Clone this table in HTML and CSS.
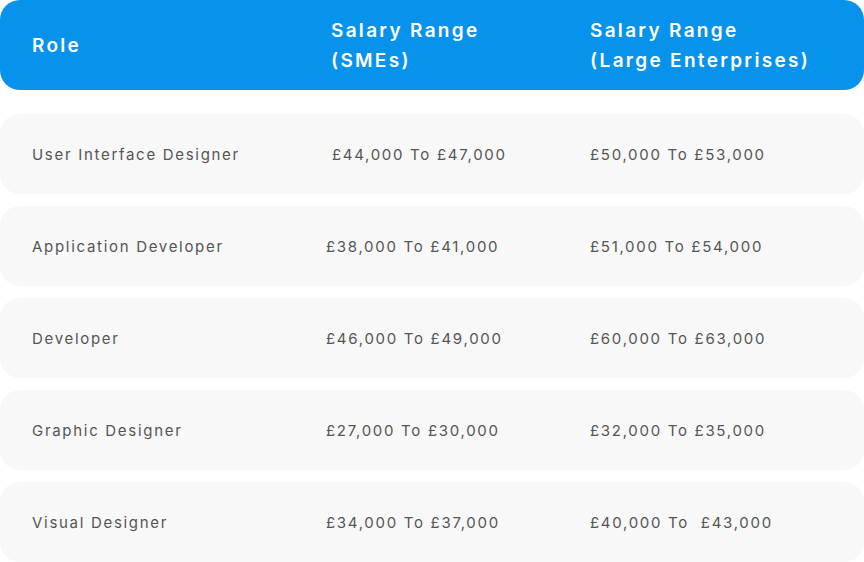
FILE: index.html
```html
<!DOCTYPE html>
<html>
<head>
<meta charset="utf-8">
<link rel="stylesheet" href="styles.css">
</head>
<body>
<div class="table">
  <div class="head">
    <div class="hcell">Role</div>
    <div class="hcell">Salary Range<br>(SMEs)</div>
    <div class="hcell">Salary Range<br>(Large Enterprises)</div>
  </div>
  <div class="row">
    <div>User Interface Designer</div>
    <div>&nbsp;£44,000 To £47,000</div>
    <div>£50,000 To £53,000</div>
  </div>
  <div class="row">
    <div>Application Developer</div>
    <div>£38,000 To £41,000</div>
    <div>£51,000 To £54,000</div>
  </div>
  <div class="row">
    <div>Developer</div>
    <div>£46,000 To £49,000</div>
    <div>£60,000 To £63,000</div>
  </div>
  <div class="row">
    <div>Graphic Designer</div>
    <div>£27,000 To £30,000</div>
    <div>£32,000 To £35,000</div>
  </div>
  <div class="row">
    <div>Visual Designer</div>
    <div>£34,000 To £37,000</div>
    <div>£40,000 To &nbsp;£43,000</div>
  </div>
</div>
</body>
</html>
```
FILE: styles.css
```css
html, body { margin: 0; padding: 0; background: #fff; }
body { font-family: "Inter", "Open Sans", sans-serif; }
.table { width: 864px; display: flex; flex-direction: column; }
.head {
  box-sizing: border-box;
  height: 90px;
  padding-top: 2px;
  background: #0792eb;
  border-radius: 20px;
  display: grid;
  grid-template-columns: 299px 259px 1fr;
  align-items: center;
  padding-left: 32px;
  color: #fff;
  font-weight: 600;
  font-size: 19px;
  letter-spacing: 2.3px;
  line-height: 30px;
  margin-bottom: 24px;
}
.row {
  height: 80px;
  background: #f8f8f8;
  border-radius: 20px;
  display: grid;
  grid-template-columns: 294px 264px 1fr;
  align-items: center;
  padding-left: 32px;
  color: #555;
  font-size: 15px;
  letter-spacing: 1.7px;
  margin-bottom: 12px;
}
.row:last-child { margin-bottom: 0; }
```
